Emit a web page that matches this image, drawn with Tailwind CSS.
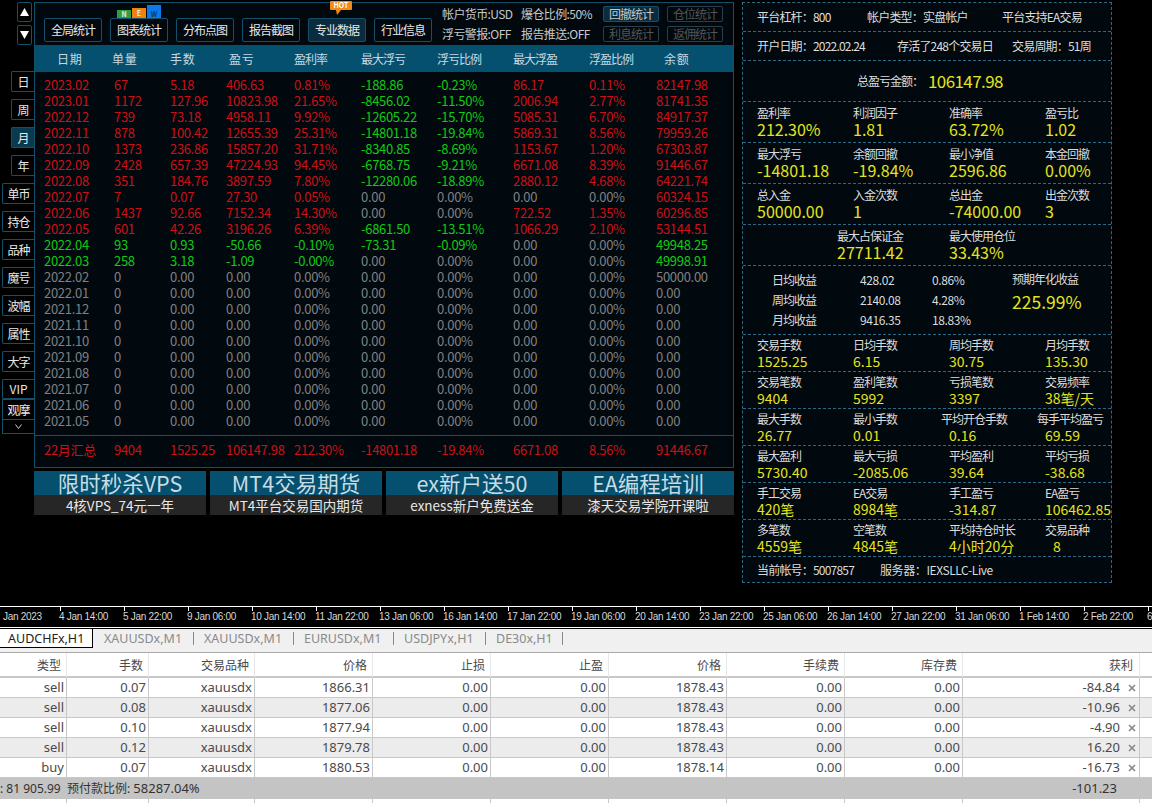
<!DOCTYPE html>
<html lang="en">
<head>
<meta charset="UTF-8">
<title>Account stats</title>
<script src="https://cdn.jsdelivr.net/npm/@tailwindcss/browser@4"></script>
</head>
<body class="bg-black w-[1152px] h-[803px] overflow-hidden font-['Noto_Sans_CJK_SC',sans-serif]">
<div class="flex h-[606px]">
	<!-- left rail -->
	<div id="rail" class="w-[34px] flex flex-col items-end pt-[2px] text-[12px] tracking-[-1px] text-[#e8e8e8]">
		<button class="w-[15px] h-[20px] mr-[2px] border border-[#14506a] rounded-[2px] flex items-center justify-center"><svg width="9" height="8" viewBox="0 0 9 8"><path d="M4.5 0L9 8H0z" fill="#fff"/></svg></button>
		<button class="w-[15px] h-[20px] mr-[2px] mt-[3px] border border-[#14506a] rounded-[2px] flex items-center justify-center"><svg width="9" height="8" viewBox="0 0 9 8"><path d="M0 0H9L4.500 8z" fill="#fff"/></svg></button>
		<div class="w-[23px] h-[21px] mt-[26px] border border-r-0 border-[#14506a] rounded-l-[2px] flex items-center justify-center">日</div>
		<div class="w-[23px] h-[21px] mt-[7px] border border-r-0 border-[#14506a] rounded-l-[2px] flex items-center justify-center">周</div>
		<div class="w-[23px] h-[21px] mt-[7px] border border-r-0 border-[#14506a] rounded-l-[2px] bg-[#0a3a50] flex items-center justify-center">月</div>
		<div class="w-[23px] h-[21px] mt-[7px] border border-r-0 border-[#14506a] rounded-l-[2px] flex items-center justify-center">年</div>
		<div class="w-[32px] h-[21px] mt-[7px] border border-r-0 border-[#14506a] rounded-l-[2px] flex items-center justify-center">单币</div>
		<div class="w-[32px] h-[21px] mt-[7px] border border-r-0 border-[#14506a] rounded-l-[2px] flex items-center justify-center">持仓</div>
		<div class="w-[32px] h-[21px] mt-[7px] border border-r-0 border-[#14506a] rounded-l-[2px] flex items-center justify-center">品种</div>
		<div class="w-[32px] h-[21px] mt-[7px] border border-r-0 border-[#14506a] rounded-l-[2px] flex items-center justify-center">魔号</div>
		<div class="w-[32px] h-[21px] mt-[7px] border border-r-0 border-[#14506a] rounded-l-[2px] flex items-center justify-center">波幅</div>
		<div class="w-[32px] h-[21px] mt-[7px] border border-r-0 border-[#14506a] rounded-l-[2px] flex items-center justify-center">属性</div>
		<div class="w-[32px] h-[21px] mt-[7px] border border-r-0 border-[#14506a] rounded-l-[2px] flex items-center justify-center">大字</div>
		<div class="w-[32px] h-[20px] mt-[7px] border border-r-0 border-[#14506a] rounded-l-[2px] flex items-center justify-center tracking-normal">VIP</div>
		<div class="w-[32px] h-[21px] border border-r-0 border-[#14506a] flex items-center justify-center">观摩</div>
		<div class="w-[32px] h-[14px] border border-t-0 border-r-0 border-[#14506a] flex items-center justify-center"><svg width="7" height="5" viewBox="0 0 7 5"><path d="M.5.500L3.500 4.500L6.500.5" fill="none" stroke="#ccc"/></svg></div>
	</div>

	<!-- main panel + ads -->
	<div class="w-[700px] pt-[2px]">
		<div class="h-[466px] bg-[#01090f] border border-[#14506a] flex flex-col">
			<div class="h-[42px] relative flex items-start pt-[15px] pl-[9px] gap-[8px] text-[12px] tracking-[-1px] text-[#e8e8e8] shrink-0">
				<div class="w-[58px] h-[24px] border border-[#14506a] rounded-[2px] flex items-center justify-center">全局统计</div>
				<div class="w-[58px] h-[24px] border border-[#14506a] rounded-[2px] flex items-center justify-center relative">图表统计
					<div class="absolute left-[6px] -top-[14px] h-[13px] flex items-end gap-[1px] text-[7px] tracking-normal font-bold leading-none">
						<span class="w-[14px] h-[8px] bg-[#2e9e3e] flex items-center justify-center">N</span>
						<span class="w-[14px] h-[10px] bg-[#f08010] flex items-center justify-center">E</span>
						<span class="w-[14px] h-[13px] bg-[#0a7ae8] flex items-end justify-center text-[#0b3a66]">W</span>
					</div>
				</div>
				<div class="w-[58px] h-[24px] border border-[#14506a] rounded-[2px] flex items-center justify-center">分布点图</div>
				<div class="w-[58px] h-[24px] border border-[#14506a] rounded-[2px] flex items-center justify-center">报告截图</div>
				<div class="w-[58px] h-[24px] border border-[#14506a] rounded-[2px] bg-[#0a2c3e] flex items-center justify-center relative">专业数据
					<div class="absolute left-[21px] -top-[18px] w-[22px] h-[9px] bg-[#f08a18] rounded-[1px] text-[7px] tracking-normal font-bold leading-[9px] text-center text-white">HOT</div>
					<svg class="absolute left-[27px] -top-[9px]" width="5" height="5" viewBox="0 0 5 5"><path d="M0 0H5L1 5z" fill="#f08a18"/></svg>
				</div>
				<div class="w-[58px] h-[24px] border border-[#14506a] rounded-[2px] flex items-center justify-center">行业信息</div>
				<div class="ml-[2px] -mt-[14px] w-[160px] grid grid-cols-[79px_80px] text-[12px] leading-[20px] text-[#c8c8c8] tracking-[-0.6px]">
					<span>帐户货币:USD</span><span>爆仓比例:50%</span>
					<span>浮亏警报:OFF</span><span>报告推送:OFF</span>
				</div>
				<div class="absolute left-[568px] top-[3px] grid grid-cols-[56px_56px] gap-x-[8px] gap-y-[4px] text-[12px] tracking-[-1px] text-[#555]">
					<div class="h-[16px] border border-[#14506a] rounded-[2px] bg-[#0a2c3e] text-[#c8c8c8] flex items-center justify-center">回撤统计</div>
					<div class="h-[16px] border border-[#2a3f4a] rounded-[2px] flex items-center justify-center">仓位统计</div>
					<div class="h-[16px] border border-[#2a3f4a] rounded-[2px] flex items-center justify-center">利息统计</div>
					<div class="h-[16px] border border-[#2a3f4a] rounded-[2px] flex items-center justify-center">返佣统计</div>
				</div>
			</div>
			<div class="h-[27px] bg-[#05506e] grid grid-cols-[70px_56px_56px_68px_67px_76px_76px_76px_67px_auto] pl-[9px] items-center text-[12px] tracking-[-1px] text-[#c8d8e0] shrink-0">
				<span class="pl-[13px]">日 期</span><span class="-ml-[2px]">单 量</span><span>手 数</span><span class="pl-[3px]">盈 亏</span><span>盈利率</span><span>最大浮亏</span><span>浮亏比例</span><span>最大浮盈</span><span>浮盈比例</span><span class="pl-[8px]">余 额</span>
			</div>
			<div id="rows" class="pt-[5px] text-[13px] tracking-[-0.3px] leading-[16px]"></div>
			<div id="total" class="mt-[6px] border-t border-[#14506a] pt-[6px] text-[13px] tracking-[-0.3px] leading-[16px]"></div>
		</div>
		<div class="mt-[3px] grid grid-cols-4 gap-x-[4px] w-[700px]">
			<div><div class="h-[24px] bg-[#05506e] text-[21.500px] leading-[24px] text-center text-[#c8dce4]">限时秒杀VPS</div><div class="h-[20px] bg-[#262626] text-[13.500px] leading-[20px] text-center text-[#e8e8e8]">4核VPS_74元一年</div></div>
			<div><div class="h-[24px] bg-[#05506e] text-[21.500px] leading-[24px] text-center text-[#c8dce4]">MT4交易期货</div><div class="h-[20px] bg-[#262626] text-[13.500px] leading-[20px] text-center text-[#e8e8e8]">MT4平台交易国内期货</div></div>
			<div><div class="h-[24px] bg-[#05506e] text-[21.500px] leading-[24px] text-center text-[#c8dce4]">ex新户送50</div><div class="h-[20px] bg-[#262626] text-[13.500px] leading-[20px] text-center text-[#e8e8e8]">exness新户免费送金</div></div>
			<div><div class="h-[24px] bg-[#05506e] text-[21.500px] leading-[24px] text-center text-[#c8dce4]">EA编程培训</div><div class="h-[20px] bg-[#262626] text-[13.500px] leading-[20px] text-center text-[#e8e8e8]">漆天交易学院开课啦</div></div>
		</div>
	</div>

	<!-- right stats panel -->
	<div class="ml-[8px] mt-[2px] w-[370px] h-[581px] bg-[#01090f] border border-dashed border-[#2a6a85] text-[12px] text-[#dcdcdc]" id="stats">
		<div class="h-[29px] border-b border-dashed border-[#2a6a85] flex items-center pl-[14px] tracking-[-0.8px] whitespace-nowrap"><span class="w-[110px]">平台杠杆：800</span><span class="w-[135px]">帐户类型：实盘帐户</span><span>平台支持EA交易</span></div>
		<div class="h-[29px] border-b border-dashed border-[#2a6a85] flex items-center pl-[14px] tracking-[-0.8px] whitespace-nowrap"><span class="w-[140px]">开户日期：2022.02.24</span><span class="w-[115px]">存活了248个交易日</span><span>交易周期：51周</span></div>
		<div class="h-[41px] border-b border-dashed border-[#2a6a85] flex items-center pl-[114px] whitespace-nowrap"><span class="w-[71px] tracking-[-1px]">总盈亏金额：</span><span class="text-[17px] tracking-[-0.6px] text-[#e4e41e]">106147.98</span></div>
		<div id="big"></div>
		<div class="h-[69px] border-b border-dashed border-[#2a6a85] flex">
			<div class="w-[269px] pl-[29px] grid grid-cols-[88px_72px_auto] content-center leading-[20px] tracking-[-0.4px]">
				<span class="tracking-[-1px]">日均收益</span><span>428.02</span><span>0.86%</span>
				<span class="tracking-[-1px]">周均收益</span><span>2140.08</span><span>4.28%</span>
				<span class="tracking-[-1px]">月均收益</span><span>9416.35</span><span>18.83%</span>
			</div>
			<div class="pt-[3px] leading-[20px]"><div class="tracking-[-1px]">预期年化收益</div><div class="text-[17.500px] leading-[26px] text-[#e4e41e]">225.99%</div></div>
		</div>
		<div id="small"></div>
		<div class="h-[26px] flex items-center pl-[14px] whitespace-nowrap"><span class="w-[123px] tracking-[-0.8px]">当前帐号：5007857</span><span class="tracking-[-0.4px]">服务器：IEXSLLC-Live</span></div>
	</div>
</div>

<!-- time axis -->
<div class="h-[21px] border-t border-white flex overflow-hidden text-[10px] tracking-[-0.3px] leading-[17px] text-[#d8d8d8] font-['Liberation_Sans',sans-serif]" id="axis"></div>

<!-- tabs -->
<div class="border-t border-white h-[2px] bg-black"></div>
<div class="h-[24px] bg-[#f0f0f0] flex text-[12.500px] font-['Noto_Sans',sans-serif] text-[#8a8a8a] border-b border-[#a8a8a8]">
	<div class="w-[93px] h-[19px] bg-white border-r border-b border-black text-[#222] pl-[8px] leading-[20px]">AUDCHFx,H1</div>
	<div class="w-[101px] h-[13px] mt-[3px] pl-[11px] border-r border-[#888] leading-[14px]">XAUUSDx,M1</div>
	<div class="w-[100px] h-[13px] mt-[3px] pl-[10px] border-r border-[#888] leading-[14px]">XAUUSDx,M1</div>
	<div class="w-[100px] h-[13px] mt-[3px] pl-[10px] border-r border-[#888] leading-[14px]">EURUSDx,M1</div>
	<div class="w-[92px] h-[13px] mt-[3px] pl-[10px] border-r border-[#888] leading-[14px]">USDJPYx,H1</div>
	<div class="w-[77px] h-[13px] mt-[3px] pl-[10px] border-r border-[#888] leading-[14px]">DE30x,H1</div>
</div>

<!-- orders table -->
<div id="orders" class="font-['Noto_Sans',sans-serif] text-[13px] text-[#4a4a4a]"></div>

<script>
	const r = 'text-[#cc1014]', g = 'text-[#14c814]', n = 'text-[#808080]';
	const cols = 'grid grid-cols-[70px_56px_56px_68px_67px_76px_76px_76px_67px_auto] pl-[9px]';

	// date, orders, lots, pnl, rate, then max loss / profit and balance
	const months = [
		['2023.02','67','5.18','406.63','0.81%','-188.86','-0.23%','86.17','0.11%','82147.98'],
		['2023.01','1172','127.96','10823.98','21.65%','-8456.02','-11.50%','2006.94','2.77%','81741.35'],
		['2022.12','739','73.18','4958.11','9.92%','-12605.22','-15.70%','5085.31','6.70%','84917.37'],
		['2022.11','878','100.42','12655.39','25.31%','-14801.18','-19.84%','5869.31','8.56%','79959.26'],
		['2022.10','1373','236.86','15857.20','31.71%','-8340.85','-8.69%','1153.67','1.20%','67303.87'],
		['2022.09','2428','657.39','47224.93','94.45%','-6768.75','-9.21%','6671.08','8.39%','91446.67'],
		['2022.08','351','184.76','3897.59','7.80%','-12280.06','-18.89%','2880.12','4.68%','64221.74'],
		['2022.07','7','0.07','27.30','0.05%','0.00','0.00%','0.00','0.00%','60324.15'],
		['2022.06','1437','92.66','7152.34','14.30%','0.00','0.00%','722.52','1.35%','60296.85'],
		['2022.05','601','42.26','3196.26','6.39%','-6861.50','-13.51%','1066.29','2.10%','53144.51'],
		['2022.04','93','0.93','-50.66','-0.10%','-73.31','-0.09%','0.00','0.00%','49948.25'],
		['2022.03','258','3.18','-1.09','-0.00%','0.00','0.00%','0.00','0.00%','49998.91'],
	];
	['2022.02','2022.01','2021.12','2021.11','2021.10','2021.09','2021.08','2021.07','2021.06','2021.05'].forEach((m, i) => {
		months.push([m,'0','0.00','0.00','0.00%','0.00','0.00%','0.00','0.00%', i === 0 ? '50000.00' : '0.00']);
	});

	const colour = v => v.startsWith('-') ? g : (parseFloat(v) === 0 ? n : r);
	const rowColour = row => row[3].startsWith('-') ? g : (parseFloat(row[1]) === 0 ? n : r);

	document.getElementById('rows').innerHTML = months.map(row => {
		const base = rowColour(row);
		const cells = row.map((v, i) => {
			// the excursion columns have their own sign colour
			const c = i >= 5 && i <= 8 ? colour(v) : base;
			return `<span class="${c}">${v}</span>`;
		}).join('');
		return `<div class="${cols}">${cells}</div>`;
	}).join('');

	document.getElementById('total').innerHTML = `<div class="${cols} text-[#cc1014]">` +
		['22月汇总','9404','1525.25','106147.98','212.30%','-14801.18','-19.84%','6671.08','8.56%','91446.67'].map(v => `<span>${v}</span>`).join('') + '</div>';

	// stats cells
	const cell = (label, value, shift) => `<div><div class="tracking-[-1px] ${shift ? '-ml-[8px]' : ''}">${label}</div><div class="${value.cls}">${value.t}</div></div>`;
	const sect = (h, size, items) => `<div class="${h} border-b border-dashed border-[#2a6a85] grid grid-cols-[96px_96px_96px_auto] pl-[14px] content-center whitespace-nowrap ${size}">` + items.join('') + '</div>';

	const bigV = t => ({ t, cls: 'text-[16px] leading-[19px] text-[#e4e41e]' });
	const bigRows = [
		[['盈利率','212.30%'],['利润因子','1.81'],['准确率','63.72%'],['盈亏比','1.02']],
		[['最大浮亏','-14801.18'],['余额回撤','-19.84%'],['最小净值','2596.86'],['本金回撤','0.00%']],
		[['总入金','50000.00'],['入金次数','1'],['总出金','-74000.00'],['出金次数','3']],
	];
	document.getElementById('big').innerHTML = bigRows.map(row =>
		sect('h-[41px]', 'leading-[15px]', row.map(c => cell(c[0], bigV(c[1]))))).join('') +
		`<div class="h-[41px] border-b border-dashed border-[#2a6a85] grid grid-cols-[112px_auto] pl-[94px] content-center leading-[15px]">` +
		cell('最大占保证金', bigV('27711.42')) + cell('最大使用仓位', bigV('33.43%')) + '</div>';

	const smV = t => ({ t, cls: 'text-[14px] leading-[16px] text-[#e4e41e]' });
	const smRows = [
		[['交易手数','1525.25'],['日均手数','6.15'],['周均手数','30.75'],['月均手数','135.30']],
		[['交易笔数','9404'],['盈利笔数','5992'],['亏损笔数','3397'],['交易频率','38笔/天']],
		[['最大手数','26.77'],['最小手数','0.01'],['平均开仓手数','0.16',1],['每手平均盈亏','69.59',1]],
		[['最大盈利','5730.40'],['最大亏损','-2085.06'],['平均盈利','39.64'],['平均亏损','-38.68']],
		[['手工交易','420笔'],['EA交易','8984笔'],['手工盈亏','-314.87'],['EA盈亏','106462.85']],
		[['多笔数','4559笔'],['空笔数','4845笔'],['平均持仓时长','4小时20分'],['交易品种','<span class="pl-[8px]">8</span>']],
	];
	document.getElementById('small').innerHTML = smRows.map(row =>
		sect('h-[37px]', 'leading-[16px]', row.map(c => cell(c[0], smV(c[1]), c[2])))).join('');

	// time axis
	const ticks = ['4 Jan 14:00','5 Jan 22:00','9 Jan 06:00','10 Jan 14:00','11 Jan 22:00','13 Jan 06:00','16 Jan 14:00','17 Jan 22:00','19 Jan 06:00','20 Jan 14:00','23 Jan 22:00','25 Jan 06:00','26 Jan 14:00','27 Jan 22:00','31 Jan 06:00','1 Feb 14:00','2 Feb 22:00','6 Feb 06:00'];
	document.getElementById('axis').innerHTML = '<div class="w-[59px] shrink-0 pl-[3px] pt-[1px]">Jan 2023</div>' +
		ticks.map(t => `<div class="w-[64px] shrink-0 whitespace-nowrap pt-[1px] relative"><span class="absolute left-[1px] top-0 w-px h-[4px] bg-white"></span>${t}</div>`).join('');

	// orders
	const oCols = 'grid grid-cols-[67px_82px_106px_118px_118px_118px_118px_118px_118px_177px_12px]';
	const hdr = ['类型','手数','交易品种','价格','止损','止盈','价格','手续费','库存费','获利'];
	const orders = [
		['sell','0.07','xauusdx','1866.31','0.00','0.00','1878.43','0.00','0.00','-84.84'],
		['sell','0.08','xauusdx','1877.06','0.00','0.00','1878.43','0.00','0.00','-10.96'],
		['sell','0.10','xauusdx','1877.94','0.00','0.00','1878.43','0.00','0.00','-4.90'],
		['sell','0.12','xauusdx','1879.78','0.00','0.00','1878.43','0.00','0.00','16.20'],
		['buy','0.07','xauusdx','1880.53','0.00','0.00','1878.14','0.00','0.00','-16.73'],
	];
	let html = `<div class="${oCols} h-[25px] bg-white border-b-2 border-[#c8c8c8] leading-[24px]">` +
		hdr.map((h, i) => `<div class="text-right border-r border-[#e8e8e8] ${i === 9 ? 'pr-[6px]' : 'pr-[5px]'} font-['Noto_Sans_CJK_SC',sans-serif] text-[12px]">${h}</div>`).join('') + '</div>';
	orders.forEach((o, k) => {
		html += `<div class="${oCols} h-[20px] ${k % 2 ? 'bg-[#ececec]' : 'bg-white'} border-b border-[#c8c8c8] leading-[19px]">` +
			o.map((v, i) => i === 9
				? `<div class="border-r border-[#c8c8c8] flex justify-end items-center pr-[2px]"><span class="mr-[8px]">${v}</span><svg width="8" height="8" viewBox="0 0 8 8" class="mr-[1px]"><path d="M1 1L7 7M7 1L1 7" stroke="#888" stroke-width="1.600"/></svg></div>`
				: `<div class="text-right border-r border-[#c8c8c8] pr-[2px]">${v}</div>`).join('') + '</div>';
	});
	html += `<div class="h-[21px] bg-[#c4c4c4] flex justify-between leading-[20px] text-[#333]"><span class="whitespace-pre text-[12px]">: 81 905.99  <span class="font-['Noto_Sans_CJK_SC',sans-serif]">预付款比例</span>: <span class="text-[13px]">58287.04%</span></span><span class="mr-[35px]">-101.23</span></div>`;
	html += `<div class="${oCols} h-[5px] bg-white">` + hdr.map(() => '<div class="border-r border-[#c8c8c8]"></div>').join('') + '</div>';
	document.getElementById('orders').innerHTML = html;
</script>
</body>
</html>
